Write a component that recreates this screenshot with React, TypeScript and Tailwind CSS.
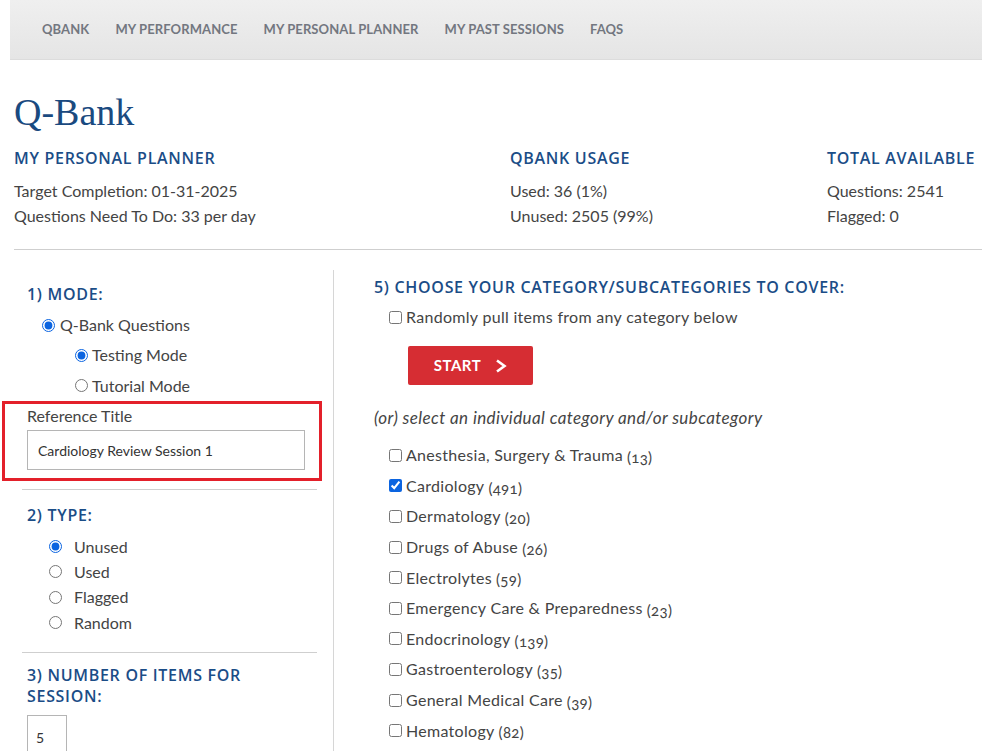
import React from 'react';

const navItems = ['QBank', 'My Performance', 'My Personal Planner', 'My Past Sessions', 'FAQs'];

const categories: { name: string; count: number; checked?: boolean }[] = [
  { name: 'Anesthesia, Surgery & Trauma', count: 13 },
  { name: 'Cardiology', count: 491, checked: true },
  { name: 'Dermatology', count: 20 },
  { name: 'Drugs of Abuse', count: 26 },
  { name: 'Electrolytes', count: 59 },
  { name: 'Emergency Care & Preparedness', count: 23 },
  { name: 'Endocrinology', count: 139 },
  { name: 'Gastroenterology', count: 35 },
  { name: 'General Medical Care', count: 39 },
  { name: 'Hematology', count: 82 },
];

const headingBase = "font-['Open_Sans',sans-serif] font-semibold text-[16px] tracking-[0.7px] uppercase text-[#1b4d87]";
const heading = `${headingBase} leading-5`;

const StatBlock = ({ title, lines }: { title: string; lines: string[] }) => (
  <div>
    <h3 className={heading}>{title}</h3>
    <div className="mt-[10px] leading-[25px]">
      {lines.map((l) => (
        <div key={l}>{l}</div>
      ))}
    </div>
  </div>
);

const App: React.FC = () => {
  return (
    <div className="min-h-screen bg-white font-['Lato',sans-serif] text-[16px] text-[#444] overflow-hidden">
      {/* Top navigation */}
      <nav className="ml-[10px] h-[60px] flex items-center gap-[26px] pl-[32px] bg-gradient-to-b from-[#efefef] to-[#e5e5e5] border-b border-[#dcdcdc]">
        {navItems.map((item) => (
          <a key={item} className="text-[13px] font-bold uppercase text-[#737780] tracking-[0.1px]">
            {item}
          </a>
        ))}
      </nav>

      <div className="pl-[14px]">
        <h1 className="mt-[30px] font-['Liberation_Serif',serif] text-[38px] leading-[44px] text-[#1a4a80]">Q-Bank</h1>

        {/* Planner summary */}
        <div className="mt-[14px] grid grid-cols-[496px_317px_1fr]">
          <StatBlock
            title="My Personal Planner"
            lines={['Target Completion: 01-31-2025', 'Questions Need To Do: 33 per day']}
          />
          <StatBlock title="QBank Usage" lines={['Used: 36 (1%)', 'Unused: 2505 (99%)']} />
          <StatBlock title="Total Available" lines={['Questions: 2541', 'Flagged: 0']} />
        </div>

        <hr className="mt-[21px] border-t border-[#cfcfcf]" />

        <div className="mt-[20px] flex">
          {/* Session options */}
          <aside className="w-[320px] shrink-0 border-r border-[#d6d6d6] pl-[8px] pr-[16px] pt-[14px]">
            <div className="pl-[5px]">
              <h3 className={heading}>1) Mode:</h3>
              <label className="mt-[6px] flex h-[30px] items-center pl-[15px]">
                <input type="radio" defaultChecked className="m-0 mr-[5px] h-[13px] w-[13px] accent-[#0b64e0]" />
                Q-Bank Questions
              </label>
              <label className="flex h-[30px] items-center pl-[48px]">
                <input type="radio" name="mode" defaultChecked className="m-0 mr-[4px] h-[13px] w-[13px] accent-[#0b64e0]" />
                Testing Mode
              </label>
              <label className="flex h-[31px] items-center pl-[48px]">
                <input type="radio" name="mode" className="m-0 mr-[4px] h-[13px] w-[13px] accent-[#0b64e0]" />
                Tutorial Mode
              </label>
            </div>

            <div className="-ml-[20px] w-[320px] border-[3px] border-[#e3202a] pl-[22px] pb-[8px]">
              <div className="leading-[24px]">Reference Title</div>
              <input
                type="text"
                defaultValue="Cardiology Review Session 1"
                className="mt-[2px] h-[40px] w-[278px] border border-[#b5b5b5] px-[10px] text-[14px] text-[#333] outline-none"
              />
            </div>

            <hr className="mt-[8px] border-t border-[#cfcfcf]" />

            <div className="pl-[5px] pt-[15px]">
              <h3 className={heading}>2) Type:</h3>
              <div className="mt-[9px]">
                {['Unused', 'Used', 'Flagged', 'Random'].map((t, i) => (
                  <label key={t} className="flex h-[25.3px] items-center pl-[22px]">
                    <input
                      type="radio"
                      name="type"
                      defaultChecked={i === 0}
                      className="m-0 mr-[12px] h-[13px] w-[13px] accent-[#0b64e0]"
                    />
                    {t}
                  </label>
                ))}
              </div>
            </div>

            <hr className="mt-[17px] border-t border-[#cfcfcf]" />

            <div className="pl-[5px] pt-[12px]">
              <h3 className={`${headingBase} leading-[21px]`}>
                3) Number of items for
                <br />
                session:
              </h3>
              <input
                type="text"
                defaultValue="5"
                className="mt-[8px] h-[44px] w-[40px] border border-[#b5b5b5] px-[8px] text-[14px] text-[#333] outline-none"
              />
            </div>
          </aside>

          {/* Category picker */}
          <section className="pl-[40px] pt-[7px] tracking-[0.3px]">
            <h3 className={heading}>5) Choose your category/subcategories to cover:</h3>
            <label className="mt-[5px] flex h-[30px] items-center pl-[15px]">
              <input type="checkbox" className="m-0 mr-[4px] h-[13px] w-[13px] accent-[#0b64e0]" />
              Randomly pull items from any category below
            </label>
            <button className="ml-[34px] mt-[14px] flex h-[39px] w-[125px] items-center justify-center gap-[14px] rounded-[2px] bg-[#d62d33] text-[15px] font-bold tracking-[0.5px] text-white">
              START
              <svg width="12" height="14" viewBox="0 0 12 14" fill="none">
                <path d="M2 1.5 L9.5 7 L2 12.5" stroke="white" strokeWidth="2.6" strokeLinejoin="miter" />
              </svg>
            </button>
            <p className="mt-[21px] text-[17px] italic leading-[24px] tracking-[0.4px]">
              (or) select an individual category and/or subcategory
            </p>
            <ul className="mt-[10px] pl-[15px]">
              {categories.map((c) => (
                <li key={c.name} className="flex h-[30.6px] items-center">
                  <input
                    type="checkbox"
                    defaultChecked={c.checked}
                    className="m-0 mr-[4px] h-[13px] w-[13px] accent-[#0b64e0]"
                  />
                  <span>{c.name}</span>
                  <span className="ml-[4px] mt-[4px] text-[15px] oldstyle-nums">({c.count})</span>
                </li>
              ))}
            </ul>
          </section>
        </div>
      </div>
    </div>
  );
};

export default App;
